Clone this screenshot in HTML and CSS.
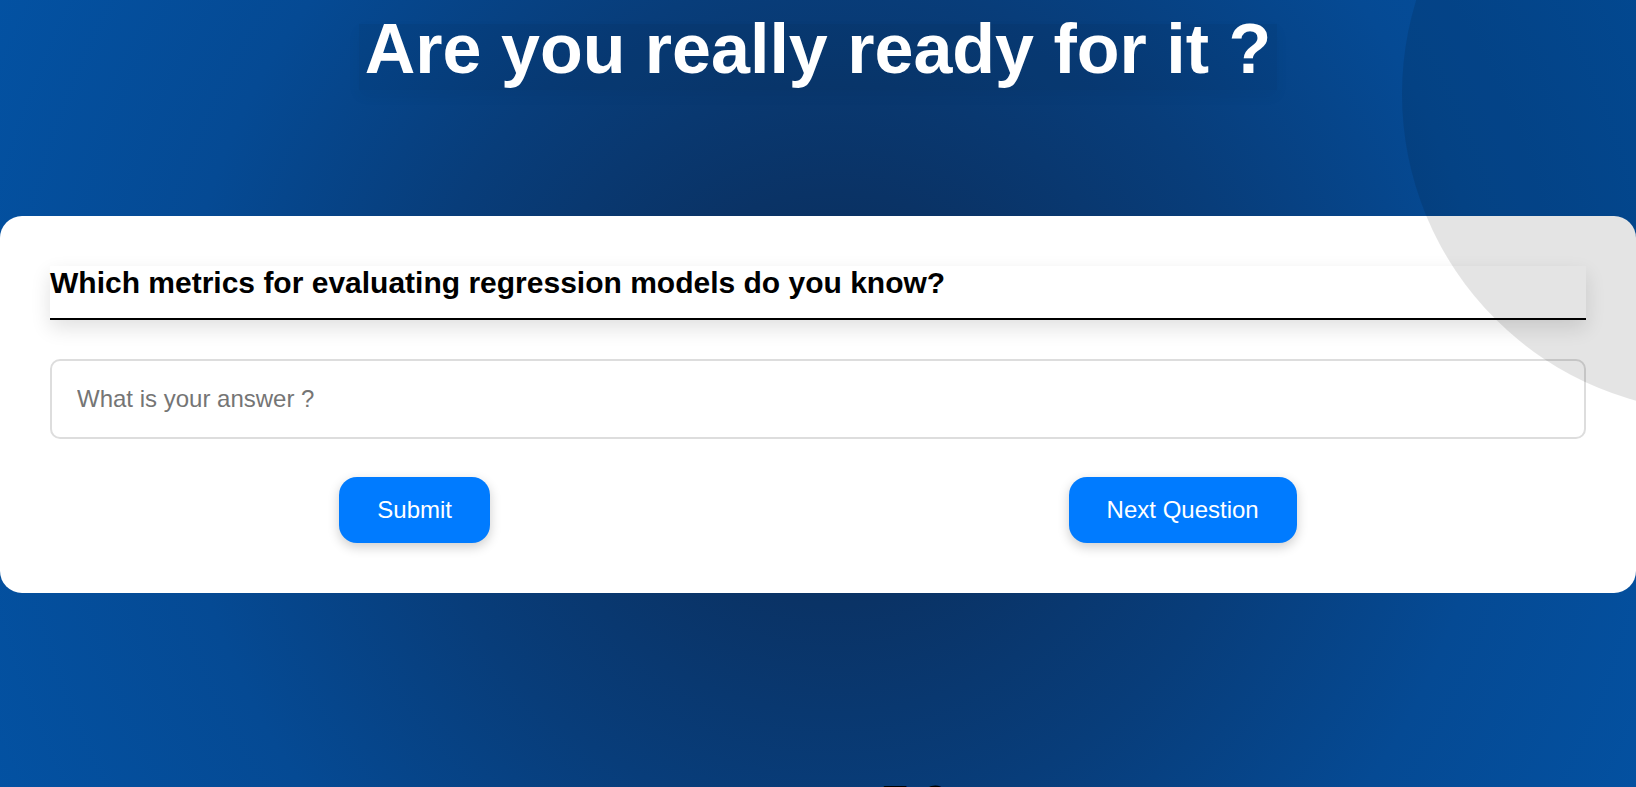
FILE: index.html
```html
<!DOCTYPE html>
<html lang="en">
<head>
<meta charset="utf-8">
<title>Are you really ready for it ?</title>
<link rel="stylesheet" href="styles.css">
</head>
<body>
  <div class="deco-circle"></div>
  <header class="header">
    <h1 class="title">Are you really ready for it ?</h1>
  </header>
  <main class="card">
    <h2 class="question">Which metrics for evaluating regression models do you know?</h2>
    <input class="answer" type="text" placeholder="What is your answer ?">
    <div class="actions">
      <button class="btn" type="button">Submit</button>
      <button class="btn" type="button">Next Question</button>
    </div>
  </main>
  <div class="score">7 0</div>
</body>
</html>
```
FILE: styles.css
```css
html, body {
  margin: 0;
  padding: 0;
}

body {
  min-height: 100vh;
  font-family: "Liberation Sans", Arial, sans-serif;
  background: radial-gradient(circle at 51% 48%, #0b2a55 0%, #0a3366 22%, #083d7a 45%, #054a94 70%, #0352a3 100%);
  overflow: hidden;
  position: relative;
}

.deco-circle {
  position: absolute;
  left: 1402px;
  top: -224px;
  width: 636px;
  height: 636px;
  border-radius: 50%;
  background: rgba(0, 0, 0, 0.105);
  z-index: 5;
  pointer-events: none;
}

.header {
  text-align: center;
  padding-top: 24px;
}

.title {
  display: inline-block;
  margin: 0;
  padding: 0 6px 16px;
  font-size: 70px;
  line-height: 50px;
  font-weight: 700;
  color: #ffffff;
  background: rgba(0, 0, 0, 0.05);
  box-shadow: 0 6px 14px rgba(0, 0, 0, 0.04);
}

.card {
  margin-top: 126px;
  background: #ffffff;
  border-radius: 22px;
  padding: 50px;
  display: flex;
  flex-direction: column;
}

.question {
  margin: 0;
  padding: 0 0 18px;
  font-size: 30px;
  font-weight: 700;
  color: #000000;
  border-bottom: 2px solid #000000;
  box-shadow: 0 8px 20px rgba(0, 0, 0, 0.12);
}

.answer {
  margin-top: 39px;
  box-sizing: border-box;
  width: 100%;
  padding: 24px 25px;
  font-family: "Liberation Sans", Arial, sans-serif;
  font-size: 24px;
  border: 2px solid #dddddd;
  border-radius: 10px;
  outline: none;
  color: #000;
}

.answer::placeholder {
  color: #757575;
}

.actions {
  margin-top: 38px;
  display: flex;
  justify-content: space-around;
}

.btn {
  font-family: "Liberation Sans", Arial, sans-serif;
  font-size: 24px;
  padding: 19px 38px;
  background: #007bff;
  color: #ffffff;
  border: none;
  border-radius: 18px;
  box-shadow: 0 4px 12px rgba(0, 0, 0, 0.2);
  cursor: pointer;
}

.score {
  margin-top: 182px;
  margin-left: 882px;
  font-size: 48px;
  font-weight: 700;
  color: #000000;
}
```
